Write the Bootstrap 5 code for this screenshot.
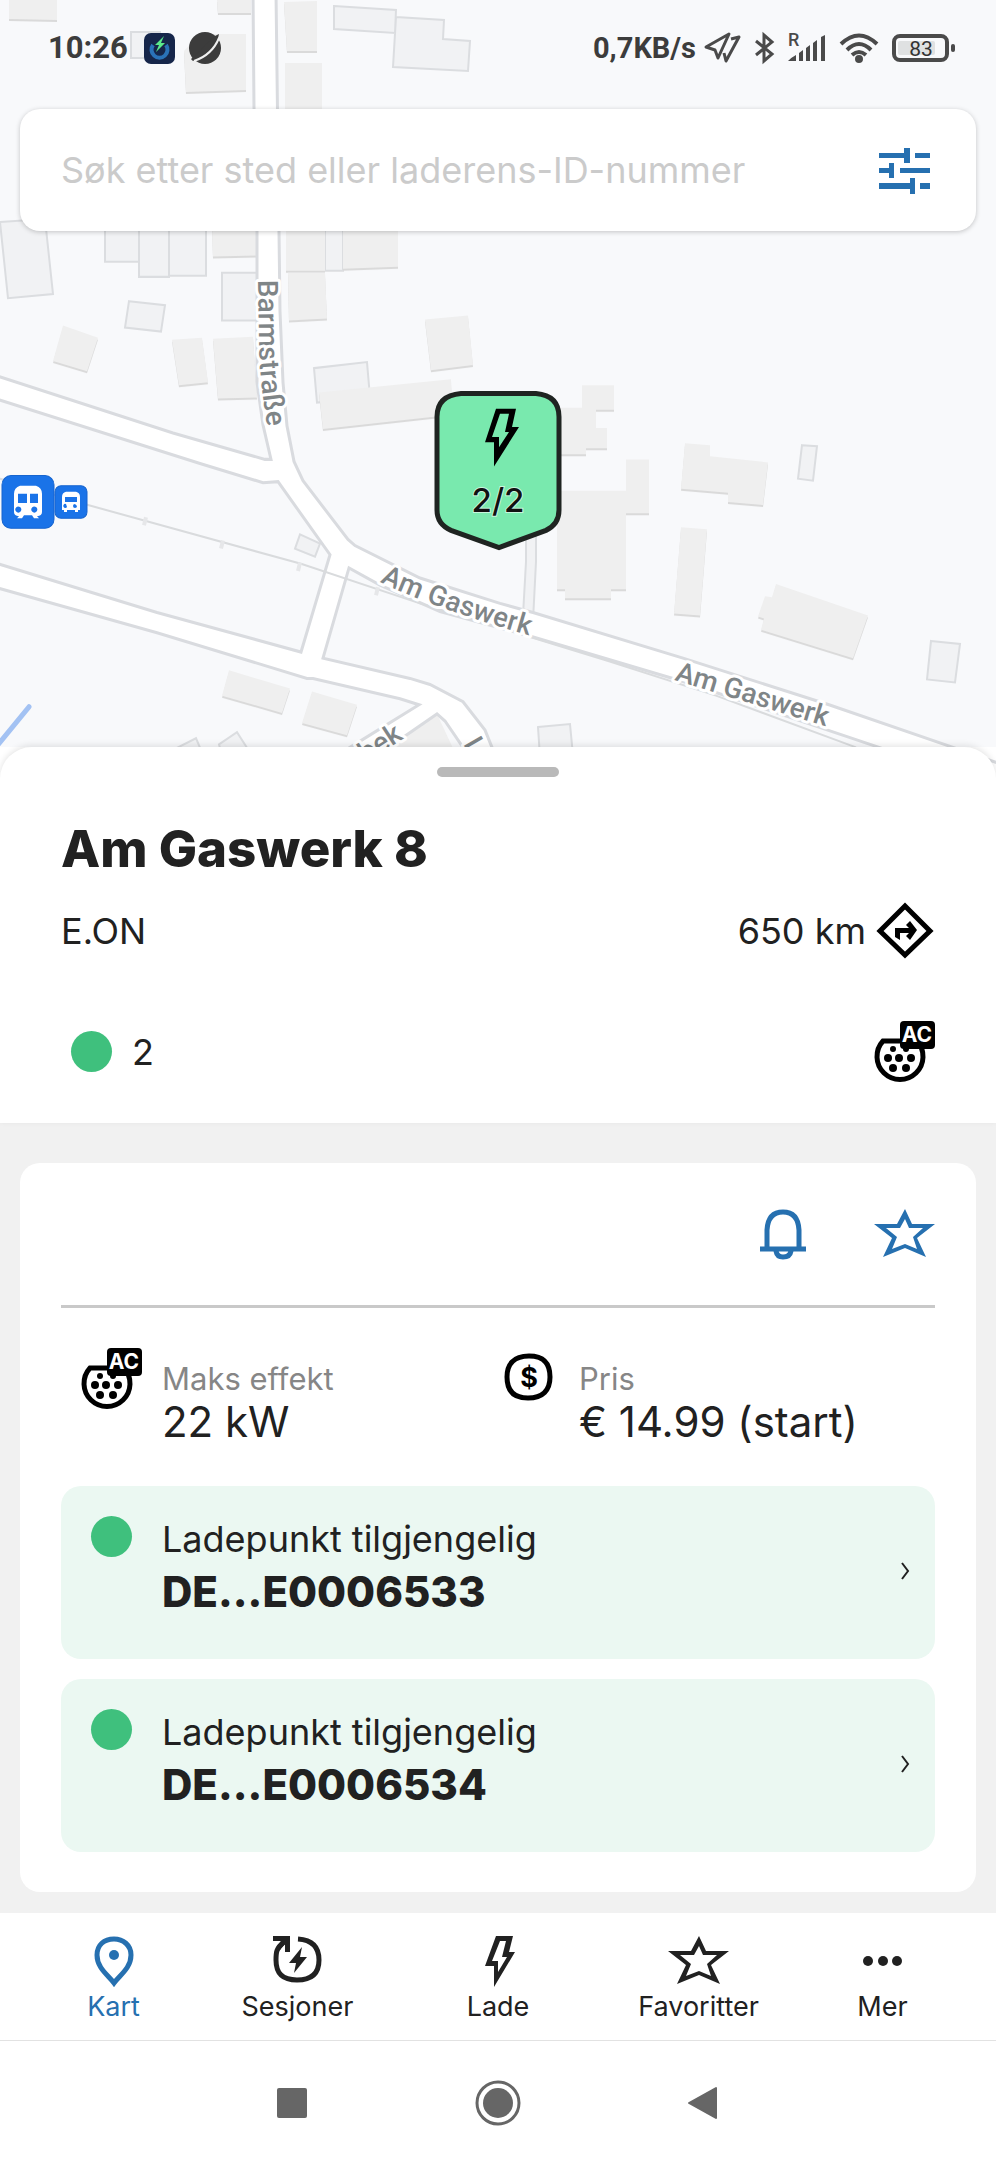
<!DOCTYPE html>
<html lang="nb">
<head>
<meta charset="utf-8">
<meta name="viewport" content="width=device-width, initial-scale=1">
<title>Am Gaswerk 8</title>
<link href="https://cdn.jsdelivr.net/npm/bootstrap@5.3.0/dist/css/bootstrap.min.css" rel="stylesheet">
<style>
  :root { --ink: #212121; --brand: #2670b0; --ok: #3fc07d; --ok-soft: #ebf8f2; --muted: #868686; --page: #f1f1f1; }
  body { font-family: Inter, "Liberation Sans", sans-serif; font-size: 36px; line-height: 46px; color: var(--ink); background: #fff; }
  svg { display: block; flex: none; overflow: visible; }
  .ico { width: 61px; height: 61px; }
  .bare { border: 0; background: none; padding: 0; color: inherit; }

  .map-area { min-height: 640px; background: #f8f9fb; }
  .map-canvas { position: absolute; top: 0; left: 0; width: 100%; height: calc(100% + 32px); overflow: hidden; }
  .lot { fill: #f1f2f4; stroke: #dbdde0; stroke-width: 2; }
  .house { fill: #efefef; filter: drop-shadow(0 2px 0 #dadada); }
  .street { fill: #fff; stroke: #d9dbdf; stroke-width: 3; }
  .street-name { font: 500 28px Roboto, sans-serif; fill: #7f8587; stroke: #fff; stroke-width: 6px; stroke-linejoin: round; paint-order: stroke; }
  .pin-count { font: 500 33px Inter, sans-serif; fill: #111; stroke: #c8f6dd; stroke-width: 2px; paint-order: stroke; }

  .status { height: 96px; padding: 0 41px 0 48px; font: 700 31px/40px Roboto, sans-serif; color: #3c3c3c; }
  .net-speed { font-size: 29px; }
  .gauge { margin-left: 14px; }
  .search { margin: 13px 20px 0; height: 122px; padding: 0 41px; border-radius: 20px; background: #fff; box-shadow: 0 1px 5px rgba(0,0,0,.22); }
  .search .form-control { font-size: 36px; line-height: 46px; padding: 0; border: 0; box-shadow: none; background: none; color: var(--ink); }
  .search .form-control::placeholder { color: #cbcbcb; opacity: 1; }

  .sheet { border-radius: 32px 32px 0 0; background: #fff; padding: 20px 61px 41px; box-shadow: 0 -2px 6px rgba(0,0,0,.1); }
  .grip { width: 122px; height: 10px; border-radius: 5px; background: #b9b9b9; }
  .place { font-size: 51px; line-height: 64px; font-weight: 800; margin: 40px 0 19px; }
  .dot { width: 41px; height: 41px; border-radius: 50%; background: var(--ok); flex: none; }
  .stock { margin-top: 60px; padding-left: 10px; gap: 20px; }

  .details { background: var(--page); padding: 40px 20px 21px; }
  .panel { background: #fff; border-radius: 20px; padding: 40px 41px 40px; }
  .tools { gap: 61px; color: var(--brand); }
  .rule { height: 3px; background: #c9c9c9; border: 0; opacity: 1; margin: 41px 0 40px; }
  .facts { padding: 0 20px; margin-bottom: 40px; }
  .fact { gap: 20px; }
  .fact dl { margin: 12px 0 0; }
  .fact dt { font-size: 31px; line-height: 38px; font-weight: 400; color: var(--muted); }
  .fact dd { font-size: 42px; line-height: 48px; margin: 0; }
  .points { gap: 20px; }
  .point { background: var(--ok-soft); border-radius: 20px; padding: 30px 25px 37px 30px; gap: 30px; color: var(--ink); }
  .point strong { font-size: 42px; line-height: 60px; font-weight: 800; }

  .tabs { display: grid; grid-template-columns: 5fr 6fr 6fr 6fr 5fr; padding: 17px 30px; border-bottom: 1px solid #e2e2e2; }
  .tabs a { color: var(--ink); font-size: 27px; line-height: 32px; }
  .tabs a.active { color: var(--brand); }
  .system { height: 119px; padding-top: 4px; color: #666; }
  .system > div { width: 62%; }
</style>
</head>
<body>
<svg class="d-none" xmlns="http://www.w3.org/2000/svg">
  <symbol id="i-ac" viewBox="0 0 61 61">
    <path d="M9 20H43A23 23 0 1 1 9 20Z" fill="none" stroke="currentColor" stroke-width="5"/>
    <g fill="currentColor">
      <circle cx="19" cy="28" r="3"/><circle cx="32" cy="28" r="3"/>
      <circle cx="14" cy="37" r="4"/><circle cx="25" cy="37" r="4"/><circle cx="37" cy="37" r="4"/>
      <circle cx="19" cy="47" r="4"/><circle cx="32" cy="47" r="4"/>
      <rect x="26" y="0" width="35" height="28" rx="4"/>
    </g>
    <text x="43" y="21" text-anchor="middle" font-family="Inter, sans-serif" font-weight="700" font-size="21" fill="#fff">AC</text>
  </symbol>
  <symbol id="i-star" viewBox="0 0 61 61">
    <path fill="currentColor" fill-rule="evenodd" d="M31 6 38 21H61L43 35 52 54 31 45 9 54 18 35 0 21H23ZM31 16 26 25H12L23 34 18 46 31 41 43 46 39 34 49 25H35Z"/>
  </symbol>
  <symbol id="i-bolt" viewBox="0 0 61 61">
    <path fill="currentColor" fill-rule="evenodd" d="M29 6H46L42 22H48L27 57V36H18ZM33 11 25 31H31V42L40 27H35L39 11Z"/>
  </symbol>
</svg>

<div class="d-flex flex-column min-vh-100">
  <header class="map-area position-relative flex-grow-1">
    <svg class="map-canvas" viewBox="0 0 996 779" preserveAspectRatio="xMidYMin slice" role="img" aria-label="Kart over Am Gaswerk">
      <path class="lot" d="M334 6 396 10 395 33 334 29ZM396 17 444 20 443 39 470 41 468 71 393 67ZM131 32H160V58H131Z"/>
      <path class="house" d="M9 0H57V20L9 19ZM217 0H251V13H218ZM284 2 317 1V51H287ZM184 51 200 34H246V90L186 92ZM285 63H322V120H285Z"/>
      <g transform="translate(0 -3) scale(1 1.014)">
        <g class="lot">
          <path d="M0 222 45 219 53 293 8 297ZM105 200H139V261H105ZM139 200H169V276H139ZM169 200H206V275H169ZM222 272H262V319H222ZM325 200H343V270H325Z"/>
          <path d="M129 300 165 304 161 330 125 326ZM314 366 367 360 370 395 317 400Z"/>
          <path d="M300 530 320 539 315 552 295 544ZM802 442 817 443 813 477 798 475ZM931 635 960 638 955 676 927 673ZM538 720 570 717 576 779H542Z"/>
          <path d="M176 741 196 731 202 745 200 779H176ZM219 737 237 725 250 745V779H230Z"/>
          <path d="M526 520V557L523 610 533 615 536 557V520Z"/>
        </g>
        <g class="house">
          <path d="M212 225H257V255L213 256ZM286 225H325V270H286ZM288 272H325L327 317 289 319ZM343 225H398V266L343 268Z"/>
          <path d="M63 324 98 336 87 369 53 359ZM172 338 202 336 208 380 179 383ZM213 337 253 335 257 395 218 396ZM425 318 468 314 473 363 431 368ZM319 390 451 377 452 412 323 426Z"/>
          <path d="M582 383H614V407H596V425H607V445H586V451H555V405H582ZM626 456H649V509H626V584H611V593H565V584H557V487H626Z"/>
          <path d="M685 440 710 442V453L768 459 763 501 728 498V489L681 485ZM681 523 707 525 700 610 674 608ZM776 579 868 610 853 652 761 624 764 613 758 611 765 591 772 592Z"/>
          <path d="M229 664 290 682 282 706 222 689ZM312 685 357 698 347 728 302 716ZM395 730 437 707 455 745 450 779H390Z"/>
        </g>
        <path class="street" d="M253-5 254 109 257 230V380L263 422 271 456H265L173 430-5 373V396L200 460 263 479 278 478 330 550 301 646 157 607-5 558V582L157 627 307 672H313L400 692 419 698 350 740 290 780H330L437 707 445 714 463 740 490 785H510L492 740 485 723 463 695 430 678 410 672 323 652 349 563 380 580 440 606 529 630 683 675 879 740 1005 785V758L953 740 829 698 683 652 533 607 500 598 420 573 355 541 348 535 303 477 294 458 287 423 283 380 280 310 279 231 276-5Z"/>
        <path d="M0 475 88 501 301 559 420 598 609 655 716 689 856 740" fill="none" stroke="#d9dbdd" stroke-width="2"/>
        <path d="M146 513 144 521M223 536 221 544M300 558 298 566M378 582 376 590" stroke="#e6e7e9" stroke-width="4"/>
        <path d="M29 700-10 747" stroke="#a3c2f3" stroke-width="5" stroke-linecap="round"/>
        <rect x="2" y="472" width="52" height="52" rx="9" fill="#1a73e8" stroke="#1765cf"/>
        <path fill="#fff" fill-rule="evenodd" d="M20 482H36Q42 484 42 490V508Q42 512 37 512L39 514H34L32 511H24L22 514H17L19 512Q14 512 14 508V490Q14 484 20 482ZM18 490V499H27V490ZM30 490V499H38V490ZM20 503A3 3 0 1 0 20 508 3 3 0 0 0 20 503ZM36 503A3 3 0 1 0 36 508 3 3 0 0 0 36 503Z"/>
        <rect x="55" y="482" width="32" height="32" rx="6" fill="#1a73e8" stroke="#1765cf"/>
        <path fill="#fff" fill-rule="evenodd" d="M66 488H76Q80 489 80 493V506H78V508H75V506H67V508H64V506H62V493Q62 489 66 488ZM65 493V498H77V493ZM66 500A2 2 0 1 0 67 503ZM75 500A2 2 0 1 0 77 502Z"/>
      </g>

      <path id="lane-a" d="M258 280 259 347Q260 387 270 443" fill="none"/>
      <path id="lane-b" d="M380 582Q435 609 545 640" fill="none"/>
      <text class="street-name"><textPath href="#lane-a">Barmstraße</textPath></text>
      <text class="street-name"><textPath href="#lane-b">Am Gaswerk</textPath></text>
      <text class="street-name" transform="translate(674 680) rotate(17)">Am Gaswerk</text>
      <text class="street-name" transform="translate(366 763) rotate(-33)">bek</text>
      <text class="street-name" transform="translate(463 744) rotate(60)">L</text>

      <g transform="translate(0 -3) scale(1 1.014)">
        <path d="M461 391H536Q559 393 559 414V506Q559 520 546 526L499 543 451 526Q437 520 437 506V414Q437 393 461 391Z" fill="#79e9ae" stroke="#1f2421" stroke-width="5"/>
        <path fill-rule="evenodd" d="M496 406H516L512 424H519L494 463V439H485ZM500 411 492 434H499V444L509 429H505L509 411Z"/>
      </g>
      <text class="pin-count" x="498" y="512" text-anchor="middle">2/2</text>
    </svg>

    <div class="position-relative">
      <div class="status d-flex align-items-center justify-content-between">
        <div class="d-flex align-items-center">
          <span>10:26</span>
          <svg class="ms-3" width="31" height="31" viewBox="0 0 31 31"><rect width="31" height="31" rx="7" fill="#16264a"/><path d="M9 12A8 8 0 1 0 22 12" fill="none" stroke="#2a72b8" stroke-width="4"/><path d="M20 3 11 12H15L12 19 21 10H17Z" fill="#5bea8b"/></svg>
          <svg class="gauge" width="33" height="33" viewBox="0 0 33 33"><circle cx="16" cy="16" r="16" fill="#3c3c3c"/><path d="M2 27Q4 31 10 27 28 15 30 2L26 4M2 27 4 24" fill="#3c3c3c"/><path d="M5 29Q23 23 30 6" fill="none" stroke="#efefef" stroke-width="2"/></svg>
        </div>
        <div class="d-flex align-items-center">
          <span class="net-speed">0,7KB/s</span>
          <svg class="ms-2" width="37" height="32" viewBox="0 0 37 32" fill="none" stroke="#4a4a4a" stroke-width="3" stroke-linejoin="round"><path d="M25 2 2 15 11 18 14 26ZM27 7 35 5 22 29 20 21"/></svg>
          <svg class="gauge" width="19" height="32" viewBox="0 0 19 32" fill="none" stroke="#4a4a4a" stroke-width="3"><path d="M1 9 17 22 9 29V3L17 10 1 23"/></svg>
          <svg class="gauge" width="38" height="32" viewBox="0 0 38 32" fill="#4a4a4a"><text x="0" y="14" font-family="Roboto, sans-serif" font-weight="500" font-size="18">R</text><path d="M0 29Q4 25 8 23V29ZM11 21 15 18V29H11ZM18 16 22 13V29H18ZM25 11 29 8V29H25ZM33 5 37 3V29H33Z"/></svg>
          <svg class="gauge" width="38" height="30" viewBox="0 0 38 30" fill="none" stroke="#4a4a4a" stroke-width="4"><path d="M1 11Q19-6 37 11M7 17Q19 5 31 17M12 22Q19 16 26 22"/><circle cx="19" cy="26" r="2"/></svg>
          <svg class="gauge" width="63" height="28" viewBox="0 0 63 28"><rect x="2" y="2" width="53" height="24" rx="6" fill="none" stroke="#4a4a4a" stroke-width="4"/><rect x="6" y="7" width="37" height="14" rx="2" fill="#dfe1e2"/><rect x="59" y="10" width="4" height="8" rx="2" fill="#4a4a4a"/><text x="29" y="22" text-anchor="middle" font-family="Roboto, sans-serif" font-weight="400" font-size="21" fill="#333">83</text></svg>
        </div>
      </div>
      <form class="search d-flex align-items-center">
        <input class="form-control" type="search" aria-label="Søk etter sted" placeholder="Søk etter sted eller laderens-ID-nummer">
        <button class="bare" type="button" aria-label="Filter">
          <svg class="ico" viewBox="0 0 61 61" fill="#2670b0"><path d="M5 13H30V8H36V23H30V18H5ZM41 13H56V18H41ZM5 28H15V23H20V38H15V33H5ZM26 28H56V33H26ZM5 43H36V38H41V54H36V49H5ZM46 43H56V49H46Z"/></svg>
        </button>
      </form>
    </div>
  </header>

  <section class="sheet position-relative">
    <div class="grip mx-auto"></div>
    <h1 class="place">Am Gaswerk 8</h1>
    <div class="d-flex align-items-center justify-content-between">
      <span>E.ON</span>
      <a class="d-flex align-items-center text-reset text-decoration-none gap-2" href="#rute"><span>650 km</span>
        <svg class="ico text-black" viewBox="0 0 61 61"><path d="M31 6 56 31 31 55 6 31Z" fill="none" stroke="currentColor" stroke-width="5"/><path fill="currentColor" d="M21 28H35L32 25 36 21 43 30 36 40 32 36 35 33H26V40L21 37Z"/></svg></a>
    </div>
    <div class="stock d-flex align-items-center">
      <span class="dot"></span><span>2</span>
      <svg class="ico text-black ms-auto"><use href="#i-ac"/></svg>
    </div>
  </section>

  <main class="details">
    <div class="panel">
      <div class="tools d-flex justify-content-end">
        <button class="bare" type="button" aria-label="Varsle meg"><svg class="ico" viewBox="0 0 61 61" fill="none" stroke="currentColor" stroke-width="5"><path d="M15 46V27Q16 9 31 9 46 9 47 27V46M8 46H54M24 48Q25 54 31 54 38 54 39 48"/></svg></button>
        <button class="bare" type="button" aria-label="Legg til favoritt"><svg class="ico"><use href="#i-star"/></svg></button>
      </div>
      <hr class="rule">
      <div class="facts row g-0">
        <div class="fact col-6 d-flex">
          <svg class="ico text-black"><use href="#i-ac"/></svg>
          <dl><dt>Maks effekt</dt><dd>22 kW</dd></dl>
        </div>
        <div class="fact col-6 d-flex">
          <svg class="ico text-black" viewBox="0 0 61 61"><path d="M31 8C48 8 52 18 52 29 52 42 45 50 30 50 15 50 9 42 9 29 9 17 15 8 31 8Z" fill="none" stroke="currentColor" stroke-width="5"/><text x="31" y="39" text-anchor="middle" font-family="Inter, sans-serif" font-weight="700" font-size="27">$</text></svg>
          <dl><dt>Pris</dt><dd>€ 14.99 (start)</dd></dl>
        </div>
      </div>
      <div class="points d-flex flex-column">
        <a class="point d-flex text-decoration-none" href="#DE-E0006533"><span class="dot"></span>
          <span class="d-flex flex-column flex-grow-1"><span>Ladepunkt tilgjengelig</span><strong>DE...E0006533</strong></span>
          <svg class="align-self-center" width="10" height="20" viewBox="0 0 10 20" fill="none" stroke="currentColor" stroke-width="2"><path d="M2 4 8 12 2 20"/></svg></a>
        <a class="point d-flex text-decoration-none" href="#DE-E0006534"><span class="dot"></span>
          <span class="d-flex flex-column flex-grow-1"><span>Ladepunkt tilgjengelig</span><strong>DE...E0006534</strong></span>
          <svg class="align-self-center" width="10" height="20" viewBox="0 0 10 20" fill="none" stroke="currentColor" stroke-width="2"><path d="M2 4 8 12 2 20"/></svg></a>
      </div>
    </div>
  </main>

  <nav class="tabs text-center" aria-label="Hovedmeny">
    <a class="active d-flex flex-column align-items-center text-decoration-none" href="#kart" aria-current="page">
      <svg class="ico" viewBox="0 0 61 61"><path d="M31 53C25 45 14 38 14 25 14 15 21 9 31 9 40 9 48 15 48 25 48 38 37 45 31 53Z" fill="none" stroke="currentColor" stroke-width="5"/><circle cx="31" cy="25" r="5" fill="currentColor"/></svg>Kart</a>
    <a class="d-flex flex-column align-items-center text-decoration-none" href="#sesjoner">
      <svg class="ico" viewBox="0 0 61 61"><path d="M17 12C9 18 9 23 9 30 9 43 15 50 30 50 45 50 52 43 52 30 52 19 47 10 31 9" fill="none" stroke="currentColor" stroke-width="5"/><path d="M6 6H23V22H18V14L13 20 10 17 14 11H6ZM35 17 22 33H29L27 43 40 27H33Z" fill="currentColor"/></svg>Sesjoner</a>
    <a class="d-flex flex-column align-items-center text-decoration-none" href="#lade"><svg class="ico"><use href="#i-bolt"/></svg>Lade</a>
    <a class="d-flex flex-column align-items-center text-decoration-none" href="#favoritter"><svg class="ico"><use href="#i-star"/></svg>Favoritter</a>
    <a class="d-flex flex-column align-items-center text-decoration-none" href="#mer">
      <svg class="ico" viewBox="0 0 61 61" fill="currentColor"><circle cx="16" cy="31" r="5"/><circle cx="31" cy="31" r="5"/><circle cx="45" cy="31" r="5"/></svg>Mer</a>
  </nav>

  <footer class="system d-flex align-items-center justify-content-center">
    <div class="row g-0">
      <div class="col-4 d-flex justify-content-center"><button class="bare" type="button" aria-label="Oversikt"><svg width="46" height="46" viewBox="0 0 46 46" fill="currentColor"><rect x="8" y="8" width="30" height="30" rx="2"/></svg></button></div>
      <div class="col-4 d-flex justify-content-center"><button class="bare" type="button" aria-label="Hjem"><svg width="46" height="46" viewBox="0 0 46 46" fill="currentColor"><circle cx="23" cy="23" r="15"/><circle cx="23" cy="23" r="21" fill="none" stroke="currentColor" stroke-width="3"/></svg></button></div>
      <div class="col-4 d-flex justify-content-center"><button class="bare" type="button" aria-label="Tilbake"><svg width="46" height="46" viewBox="0 0 46 46" fill="currentColor" stroke="currentColor" stroke-width="2" stroke-linejoin="round"><path d="M8 23 35 8V38Z"/></svg></button></div>
    </div>
  </footer>
</div>
<script src="https://cdn.jsdelivr.net/npm/bootstrap@5.3.0/dist/js/bootstrap.bundle.min.js"></script>
</body>
</html>
